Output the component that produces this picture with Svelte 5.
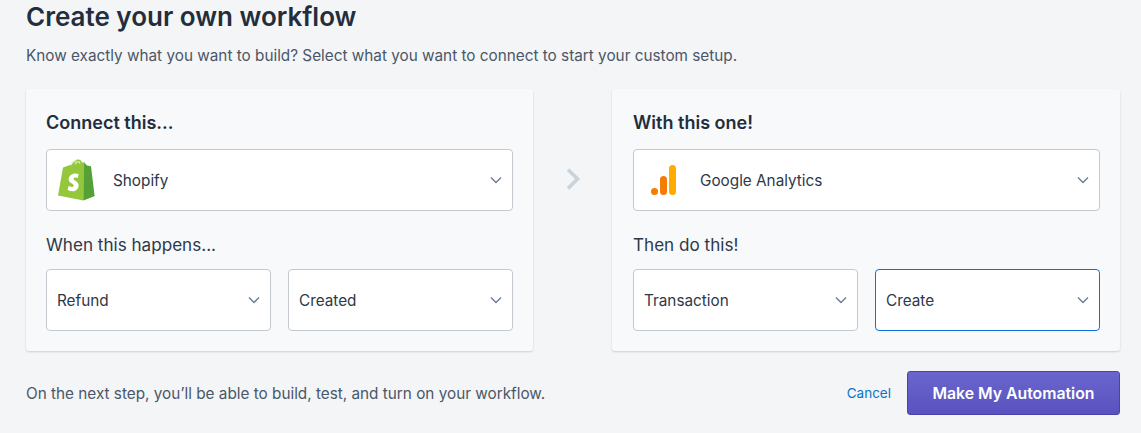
<script>
    // left and right panels share the same shape
    const panels = [
        {
            title: 'Connect this...',
            app: 'Shopify',
            icon: 'shopify',
            label: 'When this happens...',
            first: 'Refund',
            second: 'Created',
            focused: false
        },
        {
            title: 'With this one!',
            app: 'Google Analytics',
            icon: 'analytics',
            label: 'Then do this!',
            first: 'Transaction',
            second: 'Create',
            focused: true
        }
    ];
</script>

{#snippet chevron()}
    <svg class="chevron" width="12" height="8" viewBox="0 0 12 8" fill="none">
        <path d="M1 1.5l5 5 5-5" stroke="#6b7c93" stroke-width="1.4" />
    </svg>
{/snippet}

<main>
    <h1>Create your own workflow</h1>
    <p class="intro">Know exactly what you want to build? Select what you want to connect to start your custom setup.</p>

    <div class="builder">
        {#each panels as panel, i}
            {#if i === 1}
                <div class="arrow">
                    <svg width="16" height="24" viewBox="0 0 16 24" fill="none">
                        <path d="M3 2.5l9.5 9.5L3 21.5" stroke="#c9d3dc" stroke-width="3.6" />
                    </svg>
                </div>
            {/if}
            <section class="card">
                <h2>{panel.title}</h2>
                <div class="select app">
                    {#if panel.icon === 'shopify'}
                        <svg class="logo" width="38" height="42" viewBox="0 0 38 42">
                            <path d="M1 36.5L6 8.5l9-3.2C16.5 2 19 .6 21 .6c2.2 0 3.4 1.2 4.2 3l2.2-.4L37.5 37 26.5 41.4z" fill="#95c73d" />
                            <path d="M27.2 3.6l2.8 3 4 .6L37.6 37l-11 4.2z" fill="#56a038" />
                            <path d="M13.5 6.2C14.6 3.6 17 1.6 19.5 1.8M18 5.2C19 3.4 20.5 2.5 22 2.8M22.8 4.6c0-1-.2-1.6-.6-2.1" fill="none" stroke="#e6f2cf" stroke-width="1.2" />
                            <path d="M21.6 15.2c-1-.6-2.5-.9-3.8-.8-3.9.3-6.2 3.1-6.1 6 .2 3.8 5 4 5 6.2 0 .9-.8 1.5-1.9 1.3-1.4-.1-3-1.1-3-1.1l-1.2 4s1.8 1.5 4.6 1.5c4 0 6.6-2.8 6.4-6.4-.2-3.8-5-4.4-5-6 0-.6.5-1.3 1.9-1.3 1.1 0 2.2.5 2.2.5z" fill="#fff" />
                        </svg>
                    {:else}
                        <svg class="logo" width="38" height="42" viewBox="0 0 38 42">
                            <circle cx="10.5" cy="32.5" r="3.5" fill="#f57c00" />
                            <rect x="16" y="17" width="7" height="19" rx="3.5" fill="#f57c00" />
                            <rect x="25" y="6" width="7" height="30" rx="3.5" fill="#ffab00" />
                        </svg>
                    {/if}
                    <span>{panel.app}</span>
                    {@render chevron()}
                </div>
                <h3>{panel.label}</h3>
                <div class="pair">
                    <div class="select"><span>{panel.first}</span>{@render chevron()}</div>
                    <div class="select" class:focused={panel.focused}><span>{panel.second}</span>{@render chevron()}</div>
                </div>
            </section>
        {/each}
    </div>

    <footer>
        <p>On the next step, you’ll be able to build, test, and turn on your workflow.</p>
        <a href="#cancel">Cancel</a>
        <button>Make My Automation</button>
    </footer>
</main>

<style>
    :global(body) {
        background-color: #f4f5f7;
        font-family: Inter, "Liberation Sans", sans-serif;
        color: #1f2d3d;
    }

    main {
        padding: 0 21px 18px 26px;
    }

    h1 {
        margin: 0;
        font-size: 26px;
        line-height: 34px;
        font-weight: 600;
        color: #222e3c;
    }

    .intro {
        margin: 10px 0 0;
        font-size: 15.3px;
        line-height: 24px;
        color: #4a5768;
    }

    .builder {
        display: grid;
        grid-template-columns: 507px 79px 508px;
        margin-top: 21px;
    }

    .arrow {
        display: flex;
        justify-content: center;
        padding-top: 78px;
    }

    .card {
        height: 262px;
        box-sizing: border-box;
        padding: 21px 20px 20px;
        background-color: #f8f9fb;
        border-radius: 3px;
        box-shadow: 0 1px 2px rgba(30, 40, 60, 0.18);
    }

    .card:last-child {
        padding-left: 21px;
    }

    h2 {
        margin: 0;
        font-size: 18px;
        line-height: 26px;
        font-weight: 600;
        color: #222e3c;
    }

    h3 {
        margin: 21px 0 11px;
        font-size: 17.1px;
        line-height: 26px;
        font-weight: 400;
        color: #2d3848;
    }

    .select {
        height: 62px;
        box-sizing: border-box;
        display: flex;
        align-items: center;
        padding: 0 10px;
        background-color: #fff;
        border: 1px solid #c4c9cf;
        border-radius: 4px;
        font-size: 15.3px;
        color: #2d3848;
    }

    .select span {
        flex: 1;
    }

    .select.focused {
        border-color: #0f6fde;
    }

    .app {
        margin-top: 13px;
    }

    .logo {
        flex: none;
        margin-right: 18px;
    }

    .chevron {
        flex: none;
    }

    .pair {
        display: grid;
        grid-template-columns: 1fr 1fr;
        gap: 17px;
    }

    footer {
        display: flex;
        align-items: center;
        margin-top: 20px;
    }

    footer p {
        flex: 1;
        margin: 0;
        font-size: 15.3px;
        color: #4a5768;
    }

    footer a {
        margin-right: 16px;
        font-size: 13.5px;
        color: #0a74c9;
        text-decoration: none;
    }

    button {
        width: 213px;
        height: 44px;
        font-family: inherit;
        font-size: 15.8px;
        font-weight: 600;
        color: #fff;
        background: linear-gradient(#6a66cd, #5a52c0);
        border: 1px solid #4a44a8;
        border-radius: 3px;
    }
</style>
